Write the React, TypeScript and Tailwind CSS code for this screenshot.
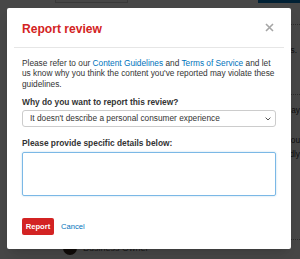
import React from 'react';

const font = { fontFamily: '"Liberation Sans", Arial, sans-serif' };

export default function App() {
    return (
        <div className="relative w-[300px] h-[259px] overflow-hidden bg-white" style={font}>
            {/* page behind the dialog */}
            <div className="flex flex-col pl-[55px] text-[8.3px] leading-[10.3px] text-[#333]">
                <div className="flex h-[3px]">
                    <div className="w-[73px] h-[3px] border border-t-0 border-[#ccc] bg-[#f7f7f7]"></div>
                    <div className="ml-auto w-[42px] h-[3px] bg-[#0073bb]"></div>
                </div>
                <div className="mt-[21px] border-t border-dotted border-[#999]"></div>
                <div className="mt-[20px] text-right pr-[3px]">opening hours.</div>
                <div className="mt-[39px] border-t border-dotted border-[#999]"></div>
                <div className="mt-[10px] text-right pr-[0px]">the whole day</div>
                <div className="mt-[19px] text-right pr-[0px]">Thank you</div>
                <div className="mt-[4px] text-right pr-[0px]">kindly</div>
                <div className="mt-[80px] border-t border-dotted border-[#999]"></div>
                <div className="flex items-center gap-[6px] pl-[8px] mt-[1px]">
                    <div className="w-[14px] h-[14px] rounded-full bg-[#3a2a22]"></div>
                    <span className="text-[#666] text-[9px]">Business Owner</span>
                </div>
            </div>

            {/* overlay */}
            <div className="absolute inset-0 bg-black/[0.72]"></div>

            {/* dialog */}
            <div className="absolute left-[7px] top-[8px] w-[284px] bg-white rounded-[2px] shadow-lg">
                <div className="mx-[7px] px-[8px] pt-[14px] pb-[11px] border-b border-[#e6e6e6] flex items-start">
                    <h3 className="text-[12.1px] leading-[14px] font-bold text-[#d32323]">Report review</h3>
                    <button className="ml-auto mr-[2px] mt-[1px]">
                        <svg width="9" height="9" viewBox="0 0 9 9">
                            <path d="M1 1 L8 8 M8 1 L1 8" stroke="#a6a6a6" strokeWidth="1.6" />
                        </svg>
                    </button>
                </div>

                <div className="px-[15px] pt-[10px] pb-[14px]">
                    <p className="text-[8.3px] leading-[10.3px] text-[#333]">
                        Please refer to our <a className="text-[#0073bb]">Content Guidelines</a> and{' '}
                        <a className="text-[#0073bb]">Terms of Service</a> and let us know why you think the content
                        you've reported may violate these guidelines.
                    </p>

                    <label className="block mt-[8px] text-[8.4px] leading-[10.3px] font-bold text-[#333]">
                        Why do you want to report this review?
                    </label>
                    <div className="mt-[3px] h-[17px] flex items-center border border-[#ccc] rounded-[3px] pl-[7px] pr-[4px] text-[8.3px] text-[#333]">
                        <span>It doesn't describe a personal consumer experience</span>
                        <svg className="ml-auto" width="6" height="4" viewBox="0 0 6 4">
                            <path d="M0.6 0.6 L3 3 L5.4 0.6" stroke="#555" strokeWidth="1" fill="none" />
                        </svg>
                    </div>

                    <label className="block mt-[11px] text-[8.4px] leading-[10.3px] font-bold text-[#333]">
                        Please provide specific details below:
                    </label>
                    <textarea
                        className="block mt-[4px] w-full h-[44px] resize-none border border-[#7bb8e6] rounded-[2px] shadow-[0_0_2px_rgba(0,115,187,0.3)] outline-none"
                    ></textarea>

                    <div className="mt-[22px] flex items-center gap-[7px]">
                        <button className="w-[32px] h-[17px] bg-[#d32323] rounded-[2px] text-white font-bold text-[7.6px] leading-none">
                            Report
                        </button>
                        <a className="text-[#0073bb] text-[7.6px]">Cancel</a>
                    </div>
                </div>
            </div>
        </div>
    );
}
